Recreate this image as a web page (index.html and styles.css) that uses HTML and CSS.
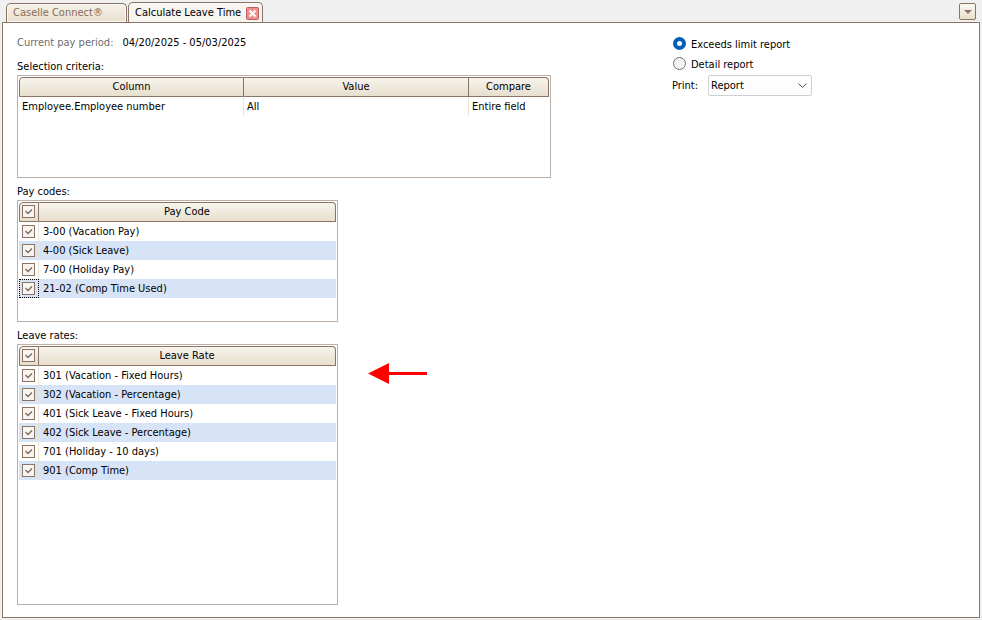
FILE: index.html
```
<!DOCTYPE html>
<html lang="en">
<head>
    <meta charset="UTF-8">
    <title>Calculate Leave Time</title>
    <link rel="stylesheet" href="styles.css">
</head>
<body>
    <header class="tab-bar">
        <button type="button" class="tab">Caselle Connect®</button>
        <div class="tab active">
            <span>Calculate Leave Time</span>
            <button type="button" class="close" aria-label="Close tab">
                <svg width="13" height="13" viewBox="0 0 13 13">
                    <rect x="0.5" y="0.5" width="12" height="12" rx="1" fill="#ee8e8e" stroke="#b9605c"/>
                    <path d="M3.5 3.5L9.5 9.5M9.5 3.5L3.5 9.5" stroke="#fff" stroke-width="2"/>
                </svg>
            </button>
        </div>
        <button type="button" class="tab-menu" aria-label="Tab list">
            <svg width="8" height="4" viewBox="0 0 8 4"><path d="M0 0H8L4 4Z" fill="#8b7365"/></svg>
        </button>
    </header>

    <main class="panel">
        <section class="criteria">
            <p class="period"><span class="muted">Current pay period:</span> <span>04/20/2025 - 05/03/2025</span></p>

            <h2 id="selection-label">Selection criteria:</h2>
            <div class="grid grid-selection">
                <table aria-labelledby="selection-label">
                    <thead>
                        <tr>
                            <th class="col-name">Column</th>
                            <th class="col-value">Value</th>
                            <th>Compare</th>
                        </tr>
                    </thead>
                    <tbody>
                        <tr>
                            <td>Employee.Employee number</td>
                            <td>All</td>
                            <td>Entire field</td>
                        </tr>
                    </tbody>
                </table>
            </div>

            <h2 id="codes-label">Pay codes:</h2>
            <div class="grid grid-codes">
                <table class="striped" aria-labelledby="codes-label">
                    <thead>
                        <tr>
                            <th class="col-check"><input type="checkbox" aria-label="All pay codes" checked></th>
                            <th>Pay Code</th>
                        </tr>
                    </thead>
                    <tbody>
                        <tr>
                            <td class="check"><input type="checkbox" id="code1" checked></td>
                            <td><label for="code1">3-00 (Vacation Pay)</label></td>
                        </tr>
                        <tr>
                            <td class="check"><input type="checkbox" id="code2" checked></td>
                            <td><label for="code2">4-00 (Sick Leave)</label></td>
                        </tr>
                        <tr>
                            <td class="check"><input type="checkbox" id="code3" checked></td>
                            <td><label for="code3">7-00 (Holiday Pay)</label></td>
                        </tr>
                        <tr>
                            <td class="check current"><input type="checkbox" id="code4" checked></td>
                            <td><label for="code4">21-02 (Comp Time Used)</label></td>
                        </tr>
                    </tbody>
                </table>
            </div>

            <h2 id="rates-label">Leave rates:</h2>
            <div class="rates-row">
                <div class="grid grid-rates">
                    <table class="striped" aria-labelledby="rates-label">
                        <thead>
                            <tr>
                                <th class="col-check"><input type="checkbox" aria-label="All leave rates" checked></th>
                                <th>Leave Rate</th>
                            </tr>
                        </thead>
                        <tbody>
                            <tr>
                                <td class="check"><input type="checkbox" id="rate1" checked></td>
                                <td><label for="rate1">301 (Vacation - Fixed Hours)</label></td>
                            </tr>
                            <tr>
                                <td class="check"><input type="checkbox" id="rate2" checked></td>
                                <td><label for="rate2">302 (Vacation - Percentage)</label></td>
                            </tr>
                            <tr>
                                <td class="check"><input type="checkbox" id="rate3" checked></td>
                                <td><label for="rate3">401 (Sick Leave - Fixed Hours)</label></td>
                            </tr>
                            <tr>
                                <td class="check"><input type="checkbox" id="rate4" checked></td>
                                <td><label for="rate4">402 (Sick Leave - Percentage)</label></td>
                            </tr>
                            <tr>
                                <td class="check"><input type="checkbox" id="rate5" checked></td>
                                <td><label for="rate5">701 (Holiday - 10 days)</label></td>
                            </tr>
                            <tr>
                                <td class="check"><input type="checkbox" id="rate6" checked></td>
                                <td><label for="rate6">901 (Comp Time)</label></td>
                            </tr>
                        </tbody>
                    </table>
                </div>
                <svg class="arrow" width="59" height="21" viewBox="0 0 59 21">
                    <path d="M0 10.5L21 0V21Z M20 9H59V12H20Z" fill="#f00"/>
                </svg>
            </div>
        </section>

        <form class="options">
            <label class="option"><input type="radio" name="report" checked>Exceeds limit report</label>
            <label class="option"><input type="radio" name="report">Detail report</label>
            <div class="print">
                <label for="print">Print:</label>
                <select id="print">
                    <option>Report</option>
                </select>
                <svg class="chevron" width="9" height="5" viewBox="0 0 9 5"><path d="M0.5 0.5L4.5 4.5L8.5 0.5" fill="none" stroke="#555"/></svg>
            </div>
        </form>
    </main>
</body>
</html>
```

FILE: styles.css
```
* {
    box-sizing: border-box;
}

body {
    display: flex;
    flex-direction: column;
    min-height: 100vh;
    margin: 0;
    padding: 2px;
    background-color: #f0f0f0;
    color: #000;
    font-family: Tahoma, "DejaVu Sans Condensed", sans-serif;
    font-size: 11px;
    line-height: 14px;
}

button, select {
    font: inherit;
    color: inherit;
}

/* Tabs */
.tab-bar {
    display: flex;
    align-items: flex-end;
    gap: 1px;
    height: 20px;
    padding-left: 4px;
}

.tab {
    height: 19px;
    width: 121px;
    padding: 0 6px;
    border: 1px solid #8b7365;
    border-bottom: none;
    border-radius: 5px 5px 0 0;
    background: linear-gradient(#f6f3ec, #e8dfcb);
    box-shadow: inset 0 0 0 1px #faf8f4;
    color: #8b6a58;
    text-align: left;
    white-space: nowrap;
}

.tab.active {
    display: flex;
    align-items: center;
    justify-content: space-between;
    height: 21px;
    width: 135px;
    margin-bottom: -1px;
    padding: 0 3px 0 6px;
    background: #f7f5f1;
    color: #000;
}

.close {
    display: flex;
    padding: 0;
    border: none;
    background: none;
}

.tab-menu {
    display: flex;
    align-items: center;
    justify-content: center;
    width: 17px;
    height: 17px;
    margin: 0 4px 2px auto;
    padding: 0;
    border: 1px solid #8b7365;
    border-radius: 2px;
    background: linear-gradient(#fbfaf7, #e8dfcb);
}

/* Main panel */
.panel {
    display: flex;
    flex: 1;
    padding: 12px 14px;
    border: 1px solid #8b7365;
    background-color: #fff;
}

.criteria {
    display: flex;
    flex-direction: column;
    width: 534px;
    margin-right: 121px;
}

.period {
    display: flex;
    gap: 9px;
    margin: 0 0 2px;
    line-height: 16px;
}

.muted {
    color: #6d6d6d;
}

h2 {
    margin: 6px 0 0;
    font-size: 11px;
    font-weight: normal;
    line-height: 16px;
}

/* Grids */
.grid {
    padding: 1px;
    border: 1px solid #bdb0a6;
}

.grid-selection {
    min-height: 103px;
}

.grid-codes {
    width: 321px;
    min-height: 122px;
}

.grid-rates {
    width: 321px;
}

.rates-row {
    display: flex;
    flex: 1;
    gap: 30px;
}

.arrow {
    margin-top: 19px;
}

table {
    width: 100%;
    border-spacing: 0;
    table-layout: fixed;
}

th {
    height: 20px;
    padding: 0;
    border: 1px solid #8b7365;
    border-left: none;
    background: linear-gradient(#f7f4ee, #e7dfcd);
    font-weight: normal;
}

th:first-child {
    border-left: 1px solid #8b7365;
    border-top-left-radius: 4px;
}

th:last-child {
    border-top-right-radius: 4px;
}

.col-name,
.col-value {
    width: 225px;
}

.col-check {
    width: 20px;
    padding: 0 1px 1px 0;
}

td {
    height: 19px;
    padding: 0 3px;
    border-right: 1px solid #e9e4d8;
}

td:last-child {
    border-right: none;
}

.check {
    padding: 0;
    text-align: center;
}

.current {
    outline: 1px dotted #000;
    outline-offset: -1px;
}

.striped tbody tr:nth-child(even) td {
    background-color: #d7e4f7;
}

.striped td + td {
    padding-left: 4px;
}

input[type="checkbox"] {
    display: block;
    width: 13px;
    height: 13px;
    margin: 0 auto;
    appearance: none;
    border: 1px solid #8b7365;
    background: #f7f5f1;
}

input[type="checkbox"]:checked {
    background: #f7f5f1 url("data:image/svg+xml,%3Csvg xmlns='http://www.w3.org/2000/svg' width='11' height='11'%3E%3Cpath d='M2.5 5L5 7.5L9 3.5' fill='none' stroke='%237d6658' stroke-width='1.3'/%3E%3C/svg%3E") center no-repeat;
}

/* Report options */
.option {
    display: flex;
    align-items: center;
    gap: 5px;
    height: 20px;
}

input[type="radio"] {
    width: 13px;
    height: 13px;
    margin: 0 0 3px 1px;
    appearance: none;
    border: 1px solid #707070;
    border-radius: 50%;
    background: #f3f3f3;
}

input[type="radio"]:checked {
    border: 4px solid #005fb8;
    background: #fff;
}

.print {
    display: flex;
    align-items: center;
    position: relative;
    width: 140px;
}

.print label {
    width: 36px;
}

.print select {
    flex: 1;
    height: 21px;
    padding: 0 2px;
    appearance: none;
    border: 1px solid #d0d0d0;
    border-radius: 2px;
    background: #fdfdfd;
}

.chevron {
    position: absolute;
    right: 5px;
    top: 8px;
    pointer-events: none;
}
```
